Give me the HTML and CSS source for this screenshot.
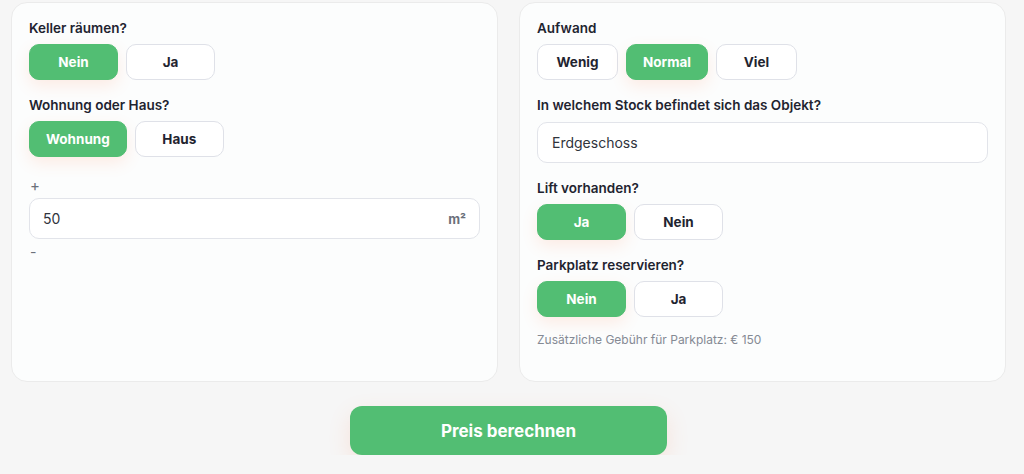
FILE: index.html
```html
<!DOCTYPE html>
<html lang="de">
<head>
<meta charset="utf-8">
<link rel="stylesheet" href="styles.css">
</head>
<body>
<div class="page">
  <div class="cards">
    <section class="card">
      <div class="field">
        <div class="label">Keller räumen?</div>
        <div class="choices">
          <button class="opt active">Nein</button>
          <button class="opt">Ja</button>
        </div>
      </div>
      <div class="field">
        <div class="label">Wohnung oder Haus?</div>
        <div class="choices">
          <button class="opt active">Wohnung</button>
          <button class="opt">Haus</button>
        </div>
      </div>
      <div class="field stepper">
        <div class="step">+</div>
        <div class="input">
          <span class="value">50</span>
          <span class="unit">m²</span>
        </div>
        <div class="step minus">-</div>
      </div>
    </section>
    <section class="card">
      <div class="field">
        <div class="label">Aufwand</div>
        <div class="choices">
          <button class="opt small">Wenig</button>
          <button class="opt small active">Normal</button>
          <button class="opt small">Viel</button>
        </div>
      </div>
      <div class="field">
        <div class="label">In welchem Stock befindet sich das Objekt?</div>
        <div class="input select">
          <span class="value">Erdgeschoss</span>
        </div>
      </div>
      <div class="field">
        <div class="label">Lift vorhanden?</div>
        <div class="choices">
          <button class="opt active">Ja</button>
          <button class="opt">Nein</button>
        </div>
      </div>
      <div class="field">
        <div class="label">Parkplatz reservieren?</div>
        <div class="choices">
          <button class="opt active">Nein</button>
          <button class="opt">Ja</button>
        </div>
        <div class="note">Zusätzliche Gebühr für Parkplatz: € 150</div>
      </div>
    </section>
  </div>
  <div class="actions">
    <button class="submit">Preis berechnen</button>
  </div>
</div>
</body>
</html>
```
FILE: styles.css
```css
* { box-sizing: border-box; }
html, body {
  margin: 0;
  background: #f6f6f6;
  font-family: Inter, "Noto Sans", sans-serif;
  color: #1f2430;
}
.page {
  padding: 2px 18px 0 11px;
}
.cards {
  display: grid;
  grid-template-columns: 487px 487px;
  gap: 21px;
}
.card {
  background: #fcfdfd;
  border: 1px solid #ebebeb;
  border-radius: 16px;
  height: 380px;
  padding: 17px 17px;
  display: flex;
  flex-direction: column;
  gap: 17px;
}
.field {
  display: flex;
  flex-direction: column;
  gap: 8px;
}
.label {
  font-size: 13.5px;
  font-weight: 600;
  line-height: 16px;
  color: #1f2430;
}
.choices {
  display: flex;
  gap: 8px;
}
.opt {
  height: 36px;
  min-width: 89px;
  padding: 0 16px;
  border: 1px solid #dfe1e8;
  border-radius: 10px;
  background: #ffffff;
  font-family: inherit;
  font-size: 13.5px;
  font-weight: 700;
  color: #1f2430;
}
.opt.small { min-width: 81px; }
.opt.active {
  background: #52be73;
  border-color: #52be73;
  color: #ffffff;
  box-shadow: 0 6px 16px rgba(255, 130, 80, 0.14);
}
.input {
  height: 41px;
  border: 1px solid #e2e4ea;
  border-radius: 10px;
  background: #ffffff;
  display: flex;
  align-items: center;
  justify-content: space-between;
  padding: 0 13px 0 13px;
  font-size: 14px;
  color: #30343c;
}
.select { padding-left: 14px; margin-top: 1px; }
.unit {
  font-size: 13px;
  font-weight: 700;
  color: #6b707a;
}
.stepper { gap: 0; }
.step {
  font-size: 15px;
  line-height: 24px;
  height: 24px;
  color: #6b707a;
  padding-left: 1px;
}
.step.minus { margin-top: 3px; font-size: 14px; line-height: 20px; height: 20px; }
.note {
  margin-top: 7px;
  font-size: 12px;
  color: #858a94;
}
.actions {
  display: flex;
  justify-content: center;
  padding-top: 24px;
}
.submit {
  width: 317px;
  height: 49px;
  border: none;
  border-radius: 12px;
  background: #52be73;
  color: #ffffff;
  font-family: inherit;
  font-size: 17px;
  font-weight: 700;
  box-shadow: 0 8px 22px rgba(255, 130, 80, 0.16);
}
```
